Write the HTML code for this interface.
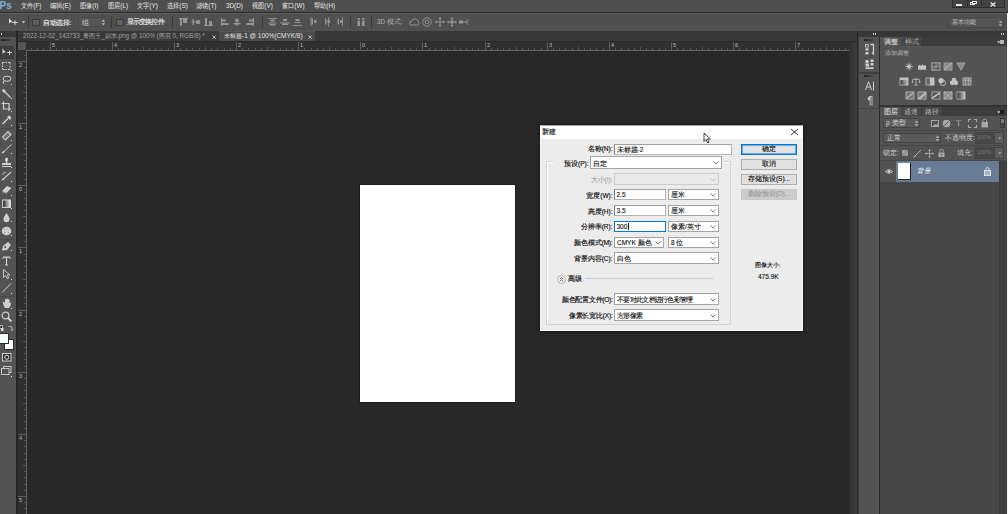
<!DOCTYPE html>
<html><head><meta charset="utf-8">
<style>
*{margin:0;padding:0;box-sizing:border-box}
html,body{width:1008px;height:514px;overflow:hidden;background:#282828;font-family:"Liberation Sans",sans-serif;position:relative}
.a{position:absolute}
.t{position:absolute;white-space:nowrap;line-height:1;font-weight:500}
svg.a{overflow:visible}
</style></head>
<body>
<div class="a" style="left:0px;top:0px;width:1008px;height:12px;background:#4f4f4f;"></div>
<div class="a" style="left:0px;top:12px;width:1008px;height:1px;background:#2b2b2b;"></div>
<div class="t" style="left:-0.5px;top:0.5px;font-size:10px;color:#7cb0e0;font-weight:bold">Ps</div>
<div class="t" style="left:21px;top:1.8px;font-size:7.2px;color:#ececec;transform:scaleX(0.88);transform-origin:0 0">文件(F)</div>
<div class="t" style="left:50px;top:1.8px;font-size:7.2px;color:#ececec;transform:scaleX(0.88);transform-origin:0 0">编辑(E)</div>
<div class="t" style="left:80px;top:1.8px;font-size:7.2px;color:#ececec;transform:scaleX(0.88);transform-origin:0 0">图像(I)</div>
<div class="t" style="left:108px;top:1.8px;font-size:7.2px;color:#ececec;transform:scaleX(0.88);transform-origin:0 0">图层(L)</div>
<div class="t" style="left:137px;top:1.8px;font-size:7.2px;color:#ececec;transform:scaleX(0.88);transform-origin:0 0">文字(Y)</div>
<div class="t" style="left:167px;top:1.8px;font-size:7.2px;color:#ececec;transform:scaleX(0.88);transform-origin:0 0">选择(S)</div>
<div class="t" style="left:196px;top:1.8px;font-size:7.2px;color:#ececec;transform:scaleX(0.88);transform-origin:0 0">滤镜(T)</div>
<div class="t" style="left:226px;top:1.8px;font-size:7.2px;color:#ececec;transform:scaleX(0.88);transform-origin:0 0">3D(D)</div>
<div class="t" style="left:252px;top:1.8px;font-size:7.2px;color:#ececec;transform:scaleX(0.88);transform-origin:0 0">视图(V)</div>
<div class="t" style="left:282px;top:1.8px;font-size:7.2px;color:#ececec;transform:scaleX(0.88);transform-origin:0 0">窗口(W)</div>
<div class="t" style="left:314px;top:1.8px;font-size:7.2px;color:#ececec;transform:scaleX(0.88);transform-origin:0 0">帮助(H)</div>
<div class="a" style="left:952px;top:0px;width:53px;height:8px;background:#424242;border:1px solid #2e2e2e;border-top:none"></div>
<div class="a" style="left:967px;top:0px;width:1px;height:8px;background:#2e2e2e;"></div>
<div class="a" style="left:981px;top:0px;width:1px;height:8px;background:#2e2e2e;"></div>
<div class="a" style="left:956px;top:4px;width:6px;height:1.5px;background:#e8e8e8;"></div>
<div class="a" style="left:970px;top:2px;width:5px;height:3px;background:transparent;border:1px solid #e8e8e8"></div>
<div class="a" style="left:972px;top:1px;width:5px;height:3px;background:#424242;border:1px solid #e8e8e8"></div>
<svg class="a" style="left:990px;top:1.5px" width="6" height="5"><path d="M0.6 0.5 L5.4 4.5 M5.4 0.5 L0.6 4.5" stroke="#f0f0f0" stroke-width="1.2"/></svg>
<div class="a" style="left:0px;top:13px;width:1008px;height:18px;background:#505050;"></div>
<div class="a" style="left:0px;top:13px;width:1008px;height:1px;background:#5e5e5e;"></div>
<svg class="a" style="left:8px;top:17px" width="20" height="10" viewBox="0 0 20 10"><path d="M1 1.2 L1 6.5 L2.4 5.2 L4.8 5.2 Z" fill="#ddd"/><path d="M4.5 5.5 H9.5 M7 3.5 V7.8" stroke="#ddd" stroke-width="1"/><path d="M13.8 4.3 H17.2 L15.5 6.2 Z" fill="#ddd"/></svg>
<div class="a" style="left:28px;top:16px;width:1px;height:12px;background:#3a3a3a;"></div>
<div class="a" style="left:32px;top:19px;width:7.5px;height:6.5px;background:#606060;border:1px solid #3a3a3a"></div>
<div class="t" style="left:43px;top:18.5px;font-size:7px;color:#e6e6e6;letter-spacing:-0.35px;-webkit-text-stroke:0.15px #e6e6e6">自动选择:</div>
<div class="a" style="left:78px;top:17px;width:28px;height:10px;background:#565656;border:1px solid #474747;border-radius:1px;box-shadow:inset 0 0 0 0 #000"></div>
<div class="t" style="left:82px;top:18.5px;font-size:7px;color:#d0d0d0;">组</div>
<svg class="a" style="left:101px;top:19px" width="5" height="7"><path d="M0.7 2.8 L2.5 0.8 L4.3 2.8 Z M0.7 4.2 L2.5 6.2 L4.3 4.2 Z" fill="#bbb"/></svg>
<div class="a" style="left:111px;top:16px;width:1px;height:12px;background:#3a3a3a;"></div>
<div class="a" style="left:116px;top:19px;width:7.5px;height:6.5px;background:#606060;border:1px solid #3a3a3a"></div>
<div class="t" style="left:126.5px;top:18.5px;font-size:6.8px;color:#e6e6e6;letter-spacing:-0.8px;-webkit-text-stroke:0.15px #e6e6e6">显示变换控件</div>
<div class="a" style="left:172px;top:16px;width:1px;height:12px;background:#3a3a3a;"></div>
<div class="a" style="left:262px;top:16px;width:1px;height:12px;background:#3a3a3a;"></div>
<div class="a" style="left:350px;top:16px;width:1px;height:12px;background:#3a3a3a;"></div>
<div class="a" style="left:371px;top:16px;width:1px;height:12px;background:#3a3a3a;"></div>
<div class="t" style="left:377px;top:18.5px;font-size:6.5px;color:#b0b0b0;">3D 模式:</div>
<svg class="a" style="left:179px;top:18px" width="9" height="8" viewBox="0 0 9 8"><rect x="0" y="0" width="9" height="1.2" fill="#959595"/><rect x="1" y="1" width="2" height="6.5" fill="#959595"/><rect x="4" y="1" width="4" height="4" fill="#959595"/></svg>
<svg class="a" style="left:191px;top:18px" width="10" height="8" viewBox="0 0 10 8"><rect x="0.5" y="3.5" width="9" height="1" fill="#959595"/><rect x="1.5" y="1" width="1.3" height="6" fill="#959595"/><rect x="5" y="2" width="4" height="4" rx="1" fill="#959595"/></svg>
<svg class="a" style="left:204px;top:18px" width="9" height="8" viewBox="0 0 9 8"><rect x="0" y="6.8" width="9" height="1.2" fill="#959595"/><rect x="1" y="0" width="2" height="7" fill="#959595"/><rect x="5" y="3" width="3" height="4" fill="#959595"/></svg>
<svg class="a" style="left:221px;top:18px" width="8" height="8" viewBox="0 0 8 8"><rect x="0" y="0" width="1.2" height="8" fill="#959595"/><rect x="1" y="1.5" width="4" height="2" fill="#959595"/><rect x="1" y="5" width="6.5" height="2" fill="#959595"/></svg>
<svg class="a" style="left:233px;top:18px" width="8" height="8" viewBox="0 0 8 8"><rect x="3.4" y="0" width="1.2" height="8" fill="#959595"/><rect x="2" y="1.5" width="4" height="2" fill="#959595"/><rect x="0.5" y="5" width="7" height="1.5" fill="#959595"/></svg>
<svg class="a" style="left:246px;top:18px" width="8" height="8" viewBox="0 0 8 8"><rect x="6.8" y="0" width="1.2" height="8" fill="#959595"/><rect x="3" y="1.5" width="4" height="2" fill="#959595"/><rect x="0.5" y="5" width="6.5" height="2" fill="#959595"/></svg>
<svg class="a" style="left:268px;top:18px" width="9" height="8" viewBox="0 0 9 8"><rect x="0" y="0" width="9" height="0.8" fill="#959595"/><rect x="2.5" y="1.5" width="4" height="2" fill="#959595"/><rect x="0.5" y="4.5" width="8" height="1" fill="#959595"/><rect x="1.5" y="6" width="6" height="1.5" fill="#959595"/></svg>
<svg class="a" style="left:280px;top:18px" width="10" height="8" viewBox="0 0 10 8"><rect x="3" y="1" width="4" height="2" fill="#959595"/><rect x="0" y="4.5" width="10" height="0.9" fill="#959595"/><rect x="2" y="5.5" width="6" height="1.5" fill="#959595"/></svg>
<svg class="a" style="left:293px;top:18px" width="9" height="8" viewBox="0 0 9 8"><rect x="2.5" y="1" width="4" height="2" fill="#959595"/><rect x="1.5" y="4" width="6" height="1" fill="#959595"/><rect x="0" y="7" width="9" height="0.9" fill="#959595"/></svg>
<svg class="a" style="left:310px;top:17px" width="7" height="10" viewBox="0 0 7 10"><rect x="0.5" y="0" width="0.9" height="9" fill="#959595"/><rect x="1.5" y="1.5" width="1.5" height="6" fill="#959595"/><rect x="4" y="3" width="2.5" height="3" fill="#959595"/></svg>
<svg class="a" style="left:324px;top:17px" width="7" height="10" viewBox="0 0 7 10"><rect x="1" y="1.5" width="1.5" height="6" fill="#959595"/><rect x="4.2" y="0" width="0.9" height="10" fill="#959595"/><rect x="3.5" y="3" width="2.5" height="3" fill="#959595"/></svg>
<svg class="a" style="left:336px;top:17px" width="7" height="10" viewBox="0 0 7 10"><rect x="1.5" y="1.5" width="1.5" height="6" fill="#959595"/><rect x="4" y="3" width="2.5" height="3" fill="#959595"/><rect x="6" y="0" width="0.9" height="9" fill="#959595"/></svg>
<svg class="a" style="left:357px;top:18px" width="9" height="8" viewBox="0 0 9 8"><rect x="0.5" y="0" width="2.5" height="1.5" fill="#959595"/><rect x="0.5" y="2.5" width="2.5" height="5.5" fill="#959595"/><rect x="5" y="0" width="2.5" height="1.5" fill="#959595"/><rect x="5" y="2.5" width="2.5" height="5.5" fill="#959595"/></svg>
<svg class="a" style="left:409px;top:17px" width="11" height="9" viewBox="0 0 11 9"><path d="M1 6 Q0.5 4 3 4 Q4 1 7 2 Q10 3 9.5 6 Q11 7 9 8 H2 Q0 7.5 1 6 Z" fill="none" stroke="#959595" stroke-width="0.9"/></svg>
<svg class="a" style="left:422px;top:17px" width="10" height="10" viewBox="0 0 10 10"><circle cx="5" cy="5" r="4.2" fill="none" stroke="#959595" stroke-width="0.9"/><circle cx="5" cy="5" r="1.8" fill="none" stroke="#959595" stroke-width="0.9"/></svg>
<svg class="a" style="left:435px;top:17px" width="10" height="10" viewBox="0 0 10 10"><path d="M5 0.5 V9.5 M0.5 5 H9.5" stroke="#959595" stroke-width="0.9"/><path d="M5 0 L3.5 2 H6.5 Z M5 10 L3.5 8 H6.5 Z M0 5 L2 3.5 V6.5 Z M10 5 L8 3.5 V6.5 Z" fill="#959595"/></svg>
<svg class="a" style="left:447px;top:17px" width="10" height="10" viewBox="0 0 10 10"><path d="M5 0.5 V9.5 M0.5 5 H9.5" stroke="#959595" stroke-width="0.9"/><circle cx="5" cy="5" r="1.8" fill="#959595"/><path d="M5 0 L3.5 2 H6.5 Z M5 10 L3.5 8 H6.5 Z M0 5 L2 3.5 V6.5 Z M10 5 L8 3.5 V6.5 Z" fill="#959595"/></svg>
<svg class="a" style="left:459px;top:18px" width="10" height="8" viewBox="0 0 10 8"><rect x="0" y="2.5" width="4" height="3" fill="#959595"/><path d="M4 4 H9.5 M9.5 1 L6.5 4 L9.5 7" fill="none" stroke="#959595" stroke-width="0.9"/></svg>
<div class="a" style="left:948px;top:17px;width:56px;height:11px;background:#555555;border:1px solid #474747;border-radius:1px"></div>
<div class="t" style="left:952px;top:19px;font-size:6.2px;color:#c4c4c4;">基本功能</div>
<svg class="a" style="left:998px;top:19.5px" width="5" height="7"><path d="M0.7 2.8 L2.5 0.8 L4.3 2.8 Z M0.7 4.2 L2.5 6.2 L4.3 4.2 Z" fill="#aaa"/></svg>
<div class="a" style="left:0px;top:31px;width:16px;height:6px;background:#383838;"></div>
<div class="a" style="left:0px;top:37px;width:16px;height:477px;background:#535353;"></div>
<div class="a" style="left:16px;top:31px;width:2px;height:483px;background:#262626;"></div>
<div class="a" style="left:1px;top:33px;width:1px;height:2px;background:#d0d0d0;"></div>
<div class="a" style="left:1px;top:39px;width:11px;height:2px;background:linear-gradient(90deg,#262626,#3a3a3a 70%,#555);"></div>
<div class="a" style="left:0px;top:46px;width:14px;height:12.5px;background:#3f3f3f;border:1px solid #393939;border-radius:1px"></div>
<svg class="a" style="left:2px;top:48px" width="11" height="8" viewBox="0 0 11 8"><path d="M0.5 0.5 L0.5 6 L2 4.6 L4 4.6 Z" fill="#cfcfcf"/><path d="M5 4.5 H10 M7.5 2.5 V7" stroke="#cfcfcf" stroke-width="0.9"/><circle cx="7.5" cy="4.5" r="1" fill="#cfcfcf"/></svg>
<svg class="a" style="left:2px;top:62px" width="9" height="8" viewBox="0 0 9 8"><path d="M0.5 2.5 V0.5 H2.5 M3.5 0.5 H5 M6 0.5 H8 V2.5 M8 4 V5.5 M8 6.5 V7.5 H6 M5 7.5 H3.5 M2.5 7.5 H0.5 V6 M0.5 5 V3.5" fill="none" stroke="#cfcfcf" stroke-width="1"/></svg>
<div class="a" style="left:11px;top:70px;width:1px;height:1px;background:#d8d8d8;"></div>
<svg class="a" style="left:1px;top:75px" width="11" height="10" viewBox="0 0 11 10"><ellipse cx="6" cy="3.7" rx="4" ry="2.6" fill="none" stroke="#cfcfcf" stroke-width="1"/><path d="M3 5.8 Q1.5 7 2.8 8.8" fill="none" stroke="#cfcfcf" stroke-width="1"/></svg>
<div class="a" style="left:11px;top:84px;width:1px;height:1px;background:#d8d8d8;"></div>
<svg class="a" style="left:1px;top:88px" width="11" height="10" viewBox="0 0 11 10"><path d="M3 3 L9.5 9.5" stroke="#cfcfcf" stroke-width="1.3"/><path d="M0.8 2.5 L2.5 0.8 L5 3 L3 5 Z" fill="#cfcfcf"/></svg>
<div class="a" style="left:11px;top:98px;width:1px;height:1px;background:#d8d8d8;"></div>
<svg class="a" style="left:1px;top:101px" width="11" height="10" viewBox="0 0 11 10"><path d="M2.5 0.5 V8 H10 M0.5 2.5 H8 V10" fill="none" stroke="#cfcfcf" stroke-width="1.2"/></svg>
<div class="a" style="left:11px;top:111px;width:1px;height:1px;background:#d8d8d8;"></div>
<svg class="a" style="left:1px;top:115px" width="11" height="10" viewBox="0 0 11 10"><path d="M1.5 9 L7 3.5" stroke="#cfcfcf" stroke-width="1.4"/><path d="M6 2 L9 5 L10 3.5 Q10.5 1 8 0.5 Z" fill="#cfcfcf"/></svg>
<div class="a" style="left:11px;top:125px;width:1px;height:1px;background:#d8d8d8;"></div>
<div class="a" style="left:0px;top:128px;width:14px;height:1px;background:#474747;"></div>
<svg class="a" style="left:1px;top:130px" width="11" height="10" viewBox="0 0 11 10"><path d="M1.5 7 L7 1.5 L10 4.5 L4.5 10 Z" fill="none" stroke="#cfcfcf" stroke-width="1.1"/><path d="M3.5 6 L6 8.5 M5 4.5 L7.5 7 M6.5 3 L9 5.5" stroke="#cfcfcf" stroke-width="0.7"/></svg>
<div class="a" style="left:11px;top:140px;width:1px;height:1px;background:#d8d8d8;"></div>
<svg class="a" style="left:1px;top:144px" width="11" height="10" viewBox="0 0 11 10"><path d="M3 7.5 L10.5 0.5" stroke="#cfcfcf" stroke-width="1"/><path d="M0.5 9.5 Q1 6.5 3.5 7 Q4 9 0.5 9.5 Z" fill="#cfcfcf"/></svg>
<div class="a" style="left:11px;top:153px;width:1px;height:1px;background:#d8d8d8;"></div>
<svg class="a" style="left:1px;top:157px" width="11" height="11" viewBox="0 0 11 11"><rect x="4" y="0.5" width="3" height="4" rx="1.5" fill="#cfcfcf"/><rect x="4.8" y="4" width="1.5" height="2" fill="#cfcfcf"/><rect x="1" y="6" width="9" height="2" fill="#cfcfcf"/><rect x="1" y="9" width="9" height="1" fill="#cfcfcf"/></svg>
<div class="a" style="left:11px;top:167px;width:1px;height:1px;background:#d8d8d8;"></div>
<svg class="a" style="left:1px;top:171px" width="11" height="10" viewBox="0 0 11 10"><path d="M3 7.5 L10 1" stroke="#cfcfcf" stroke-width="1.1"/><path d="M0.5 9.5 Q1 6.5 3.5 7 Q4 9 0.5 9.5 Z" fill="#cfcfcf"/><path d="M1.5 4 Q2 1 5 1.2" fill="none" stroke="#cfcfcf" stroke-width="0.8"/></svg>
<div class="a" style="left:11px;top:181px;width:1px;height:1px;background:#d8d8d8;"></div>
<svg class="a" style="left:1px;top:185px" width="11" height="9" viewBox="0 0 11 9"><path d="M1 6 L6 1 L10.5 3 L5.5 8 Z" fill="#cfcfcf"/><path d="M1 6 L5.5 8 L5.5 9 L1 7 Z" fill="#9a9a9a"/></svg>
<div class="a" style="left:11px;top:195px;width:1px;height:1px;background:#d8d8d8;"></div>
<svg class="a" style="left:1px;top:199px" width="10" height="9" viewBox="0 0 10 9"><defs><linearGradient id="g1" x1="0" x2="1"><stop offset="0" stop-color="#222"/><stop offset="1" stop-color="#eee"/></linearGradient></defs><rect x="1.5" y="1" width="8" height="7.5" fill="url(#g1)" stroke="#ddd" stroke-width="0.9"/></svg>
<div class="a" style="left:11px;top:208px;width:1px;height:1px;background:#d8d8d8;"></div>
<svg class="a" style="left:2px;top:212px" width="9" height="11" viewBox="0 0 9 11"><path d="M4.5 1 Q7.8 5.5 7.5 7.3 A3 3 0 0 1 1.5 7.3 Q1.2 5.5 4.5 1 Z" fill="#cfcfcf"/></svg>
<div class="a" style="left:11px;top:221px;width:1px;height:1px;background:#d8d8d8;"></div>
<svg class="a" style="left:1px;top:226px" width="11" height="10" viewBox="0 0 11 10"><ellipse cx="5.5" cy="5" rx="4.8" ry="4.3" fill="#cfcfcf"/><path d="M3 3 L4 4 M6 2.5 L7 3.5 M3 6 L4 7 M7 6 L8 7" stroke="#888" stroke-width="0.8"/></svg>
<div class="a" style="left:11px;top:235px;width:1px;height:1px;background:#d8d8d8;"></div>
<div class="a" style="left:0px;top:239px;width:14px;height:1px;background:#474747;"></div>
<svg class="a" style="left:1px;top:241px" width="11" height="10" viewBox="0 0 11 10"><path d="M1 9.5 L2 5 L7 1 L10 4 L6 9 Z" fill="#cfcfcf"/><circle cx="4.2" cy="6" r="1" fill="#535353"/></svg>
<div class="a" style="left:11px;top:250px;width:1px;height:1px;background:#d8d8d8;"></div>
<svg class="a" style="left:2px;top:255.5px" width="9" height="10" viewBox="0 0 9 10"><path d="M1 1.2 H8 M4.5 1.2 V9 M3 9 H6" stroke="#cfcfcf" stroke-width="1.2"/><path d="M1 1 V3 M8 1 V3" stroke="#cfcfcf" stroke-width="0.8"/></svg>
<svg class="a" style="left:3px;top:269px" width="8" height="10" viewBox="0 0 8 10"><path d="M0.5 0.5 L0.5 8.5 L2.5 6.5 L4 9.5 L5.5 9 L4.3 6 L7 6 Z" fill="none" stroke="#cfcfcf" stroke-width="0.9"/></svg>
<div class="a" style="left:11px;top:279px;width:1px;height:1px;background:#d8d8d8;"></div>
<svg class="a" style="left:1px;top:283px" width="11" height="10" viewBox="0 0 11 10"><path d="M1 9.5 L10 0.5" stroke="#cfcfcf" stroke-width="1"/></svg>
<div class="a" style="left:11px;top:293px;width:1px;height:1px;background:#d8d8d8;"></div>
<div class="a" style="left:0px;top:296px;width:14px;height:1px;background:#474747;"></div>
<svg class="a" style="left:1px;top:298px" width="11" height="11" viewBox="0 0 11 11"><path d="M2 5 Q1 4 2.5 3.5 L4 5 V1.5 Q5 0.5 5.5 1.5 V4 V1 Q6.5 0 7 1 V4 V1.5 Q8 1 8.5 2 V5 Q9.5 4 10 5 Q10 8 8 10 H4 Q2.5 8 2 5 Z" fill="#cfcfcf"/></svg>
<div class="a" style="left:11px;top:308px;width:1px;height:1px;background:#d8d8d8;"></div>
<svg class="a" style="left:1px;top:311px" width="11" height="11" viewBox="0 0 11 11"><circle cx="4.5" cy="4.5" r="3.4" fill="none" stroke="#cfcfcf" stroke-width="1.3"/><path d="M7 7 L10.5 10.5" stroke="#cfcfcf" stroke-width="1.8"/></svg>
<svg class="a" style="left:0px;top:325px" width="4" height="7" viewBox="0 0 4 7"><rect x="0" y="0.5" width="2.5" height="3" fill="#222" stroke="#ddd" stroke-width="0.7"/><rect x="1" y="3" width="2.5" height="3" fill="#ddd"/></svg>
<svg class="a" style="left:8px;top:325px" width="5" height="6" viewBox="0 0 5 6"><path d="M0.5 1.5 H3 Q4 1.5 4 3 V5.5 M3 4.5 L4 5.5 L5 4.5" fill="none" stroke="#cfcfcf" stroke-width="0.8"/></svg>
<div class="a" style="left:4px;top:339px;width:9.5px;height:10.5px;background:#ffffff;border:1px solid #2a2a2a"></div>
<div class="a" style="left:0px;top:333px;width:9px;height:10.5px;background:#f4fbfb;border:1px solid #2a2a2a;border-left:none"></div>
<svg class="a" style="left:1.5px;top:352.5px" width="10" height="9" viewBox="0 0 10 9"><rect x="0.5" y="0.5" width="8.5" height="7.5" fill="#2e2e2e" stroke="#cfcfcf" stroke-width="1"/><circle cx="4.75" cy="4.25" r="2.1" fill="none" stroke="#e0e0e0" stroke-width="1"/></svg>
<svg class="a" style="left:1px;top:366px" width="11" height="11" viewBox="0 0 11 11"><rect x="2.5" y="0.5" width="7.5" height="6" fill="none" stroke="#cfcfcf" stroke-width="0.9"/><rect x="0.5" y="2.5" width="7.5" height="6" fill="#535353" stroke="#cfcfcf" stroke-width="0.9"/></svg>
<div class="a" style="left:11px;top:376px;width:1px;height:1px;background:#d8d8d8;"></div>
<div class="a" style="left:18px;top:31px;width:839px;height:10px;background:#393939;"></div>
<div class="a" style="left:219px;top:31px;width:96px;height:10px;background:#4a4a4a;border-top:1px solid #565656"></div>
<div class="t" style="left:23px;top:33.3px;font-size:6.3px;color:#a0a0a0;">2022-12-02_143733_青图王_副本.png @ 100% (图层 0, RGB/8) *</div>
<svg class="a" style="left:211.5px;top:34.5px" width="5" height="5"><path d="M0.5 0.5 L3.8 3.8 M3.8 0.5 L0.5 3.8" stroke="#d0d0d0" stroke-width="0.9"/></svg>
<div class="t" style="left:224px;top:33.3px;font-size:6.45px;color:#e6e6e6;">未标题-1 @ 100%(CMYK/8)</div>
<svg class="a" style="left:307.5px;top:34.5px" width="5" height="5"><path d="M0.5 0.5 L3.8 3.8 M3.8 0.5 L0.5 3.8" stroke="#d0d0d0" stroke-width="0.9"/></svg>
<div class="a" style="left:18px;top:41px;width:839px;height:1px;background:#2a2a2a;"></div>
<div class="a" style="left:18px;top:42px;width:831px;height:8px;background:#303030;"></div>
<div class="a" style="left:18px;top:50px;width:9px;height:464px;background:#303030;"></div>
<div class="a" style="left:18px;top:42px;width:8px;height:8px;background:#555555;"></div>
<div class="a" style="left:26px;top:50px;width:823px;height:1px;background:#646464;"></div>
<div class="a" style="left:26px;top:50px;width:1px;height:464px;background:#646464;"></div>
<div class="a" style="left:31px;top:48px;width:1px;height:2px;background:#565656;"></div>
<div class="a" style="left:37px;top:48px;width:1px;height:2px;background:#565656;"></div>
<div class="a" style="left:43px;top:48px;width:1px;height:2px;background:#565656;"></div>
<div class="a" style="left:50px;top:42px;width:1px;height:8px;background:#5c5c5c;"></div>
<div class="t" style="left:52px;top:43px;font-size:5.5px;color:#bbb;">5</div>
<div class="a" style="left:56px;top:48px;width:1px;height:2px;background:#565656;"></div>
<div class="a" style="left:62px;top:48px;width:1px;height:2px;background:#565656;"></div>
<div class="a" style="left:68px;top:48px;width:1px;height:2px;background:#565656;"></div>
<div class="a" style="left:74px;top:48px;width:1px;height:2px;background:#565656;"></div>
<div class="a" style="left:81px;top:47px;width:1px;height:3px;background:#565656;"></div>
<div class="a" style="left:87px;top:48px;width:1px;height:2px;background:#565656;"></div>
<div class="a" style="left:93px;top:48px;width:1px;height:2px;background:#565656;"></div>
<div class="a" style="left:99px;top:48px;width:1px;height:2px;background:#565656;"></div>
<div class="a" style="left:105px;top:48px;width:1px;height:2px;background:#565656;"></div>
<div class="a" style="left:112px;top:42px;width:1px;height:8px;background:#5c5c5c;"></div>
<div class="t" style="left:114px;top:43px;font-size:5.5px;color:#bbb;">4</div>
<div class="a" style="left:118px;top:48px;width:1px;height:2px;background:#565656;"></div>
<div class="a" style="left:124px;top:48px;width:1px;height:2px;background:#565656;"></div>
<div class="a" style="left:130px;top:48px;width:1px;height:2px;background:#565656;"></div>
<div class="a" style="left:137px;top:48px;width:1px;height:2px;background:#565656;"></div>
<div class="a" style="left:143px;top:47px;width:1px;height:3px;background:#565656;"></div>
<div class="a" style="left:149px;top:48px;width:1px;height:2px;background:#565656;"></div>
<div class="a" style="left:155px;top:48px;width:1px;height:2px;background:#565656;"></div>
<div class="a" style="left:161px;top:48px;width:1px;height:2px;background:#565656;"></div>
<div class="a" style="left:168px;top:48px;width:1px;height:2px;background:#565656;"></div>
<div class="a" style="left:174px;top:42px;width:1px;height:8px;background:#5c5c5c;"></div>
<div class="t" style="left:176px;top:43px;font-size:5.5px;color:#bbb;">3</div>
<div class="a" style="left:180px;top:48px;width:1px;height:2px;background:#565656;"></div>
<div class="a" style="left:186px;top:48px;width:1px;height:2px;background:#565656;"></div>
<div class="a" style="left:192px;top:48px;width:1px;height:2px;background:#565656;"></div>
<div class="a" style="left:199px;top:48px;width:1px;height:2px;background:#565656;"></div>
<div class="a" style="left:205px;top:47px;width:1px;height:3px;background:#565656;"></div>
<div class="a" style="left:211px;top:48px;width:1px;height:2px;background:#565656;"></div>
<div class="a" style="left:217px;top:48px;width:1px;height:2px;background:#565656;"></div>
<div class="a" style="left:224px;top:48px;width:1px;height:2px;background:#565656;"></div>
<div class="a" style="left:230px;top:48px;width:1px;height:2px;background:#565656;"></div>
<div class="a" style="left:236px;top:42px;width:1px;height:8px;background:#5c5c5c;"></div>
<div class="t" style="left:238px;top:43px;font-size:5.5px;color:#bbb;">2</div>
<div class="a" style="left:242px;top:48px;width:1px;height:2px;background:#565656;"></div>
<div class="a" style="left:248px;top:48px;width:1px;height:2px;background:#565656;"></div>
<div class="a" style="left:255px;top:48px;width:1px;height:2px;background:#565656;"></div>
<div class="a" style="left:261px;top:48px;width:1px;height:2px;background:#565656;"></div>
<div class="a" style="left:267px;top:47px;width:1px;height:3px;background:#565656;"></div>
<div class="a" style="left:273px;top:48px;width:1px;height:2px;background:#565656;"></div>
<div class="a" style="left:280px;top:48px;width:1px;height:2px;background:#565656;"></div>
<div class="a" style="left:286px;top:48px;width:1px;height:2px;background:#565656;"></div>
<div class="a" style="left:292px;top:48px;width:1px;height:2px;background:#565656;"></div>
<div class="a" style="left:298px;top:42px;width:1px;height:8px;background:#5c5c5c;"></div>
<div class="t" style="left:300px;top:43px;font-size:5.5px;color:#bbb;">1</div>
<div class="a" style="left:304px;top:48px;width:1px;height:2px;background:#565656;"></div>
<div class="a" style="left:311px;top:48px;width:1px;height:2px;background:#565656;"></div>
<div class="a" style="left:317px;top:48px;width:1px;height:2px;background:#565656;"></div>
<div class="a" style="left:323px;top:48px;width:1px;height:2px;background:#565656;"></div>
<div class="a" style="left:329px;top:47px;width:1px;height:3px;background:#565656;"></div>
<div class="a" style="left:335px;top:48px;width:1px;height:2px;background:#565656;"></div>
<div class="a" style="left:342px;top:48px;width:1px;height:2px;background:#565656;"></div>
<div class="a" style="left:348px;top:48px;width:1px;height:2px;background:#565656;"></div>
<div class="a" style="left:354px;top:48px;width:1px;height:2px;background:#565656;"></div>
<div class="a" style="left:360px;top:42px;width:1px;height:8px;background:#5c5c5c;"></div>
<div class="t" style="left:362px;top:43px;font-size:5.5px;color:#bbb;">0</div>
<div class="a" style="left:367px;top:48px;width:1px;height:2px;background:#565656;"></div>
<div class="a" style="left:373px;top:48px;width:1px;height:2px;background:#565656;"></div>
<div class="a" style="left:379px;top:48px;width:1px;height:2px;background:#565656;"></div>
<div class="a" style="left:385px;top:48px;width:1px;height:2px;background:#565656;"></div>
<div class="a" style="left:391px;top:47px;width:1px;height:3px;background:#565656;"></div>
<div class="a" style="left:398px;top:48px;width:1px;height:2px;background:#565656;"></div>
<div class="a" style="left:404px;top:48px;width:1px;height:2px;background:#565656;"></div>
<div class="a" style="left:410px;top:48px;width:1px;height:2px;background:#565656;"></div>
<div class="a" style="left:416px;top:48px;width:1px;height:2px;background:#565656;"></div>
<div class="a" style="left:422px;top:42px;width:1px;height:8px;background:#5c5c5c;"></div>
<div class="t" style="left:424px;top:43px;font-size:5.5px;color:#bbb;">1</div>
<div class="a" style="left:429px;top:48px;width:1px;height:2px;background:#565656;"></div>
<div class="a" style="left:435px;top:48px;width:1px;height:2px;background:#565656;"></div>
<div class="a" style="left:441px;top:48px;width:1px;height:2px;background:#565656;"></div>
<div class="a" style="left:447px;top:48px;width:1px;height:2px;background:#565656;"></div>
<div class="a" style="left:454px;top:47px;width:1px;height:3px;background:#565656;"></div>
<div class="a" style="left:460px;top:48px;width:1px;height:2px;background:#565656;"></div>
<div class="a" style="left:466px;top:48px;width:1px;height:2px;background:#565656;"></div>
<div class="a" style="left:472px;top:48px;width:1px;height:2px;background:#565656;"></div>
<div class="a" style="left:478px;top:48px;width:1px;height:2px;background:#565656;"></div>
<div class="a" style="left:485px;top:42px;width:1px;height:8px;background:#5c5c5c;"></div>
<div class="t" style="left:487px;top:43px;font-size:5.5px;color:#bbb;">2</div>
<div class="a" style="left:491px;top:48px;width:1px;height:2px;background:#565656;"></div>
<div class="a" style="left:497px;top:48px;width:1px;height:2px;background:#565656;"></div>
<div class="a" style="left:503px;top:48px;width:1px;height:2px;background:#565656;"></div>
<div class="a" style="left:509px;top:48px;width:1px;height:2px;background:#565656;"></div>
<div class="a" style="left:516px;top:47px;width:1px;height:3px;background:#565656;"></div>
<div class="a" style="left:522px;top:48px;width:1px;height:2px;background:#565656;"></div>
<div class="a" style="left:528px;top:48px;width:1px;height:2px;background:#565656;"></div>
<div class="a" style="left:534px;top:48px;width:1px;height:2px;background:#565656;"></div>
<div class="a" style="left:541px;top:48px;width:1px;height:2px;background:#565656;"></div>
<div class="a" style="left:547px;top:42px;width:1px;height:8px;background:#5c5c5c;"></div>
<div class="t" style="left:549px;top:43px;font-size:5.5px;color:#bbb;">3</div>
<div class="a" style="left:553px;top:48px;width:1px;height:2px;background:#565656;"></div>
<div class="a" style="left:559px;top:48px;width:1px;height:2px;background:#565656;"></div>
<div class="a" style="left:565px;top:48px;width:1px;height:2px;background:#565656;"></div>
<div class="a" style="left:572px;top:48px;width:1px;height:2px;background:#565656;"></div>
<div class="a" style="left:578px;top:47px;width:1px;height:3px;background:#565656;"></div>
<div class="a" style="left:584px;top:48px;width:1px;height:2px;background:#565656;"></div>
<div class="a" style="left:590px;top:48px;width:1px;height:2px;background:#565656;"></div>
<div class="a" style="left:596px;top:48px;width:1px;height:2px;background:#565656;"></div>
<div class="a" style="left:603px;top:48px;width:1px;height:2px;background:#565656;"></div>
<div class="a" style="left:609px;top:42px;width:1px;height:8px;background:#5c5c5c;"></div>
<div class="t" style="left:611px;top:43px;font-size:5.5px;color:#bbb;">4</div>
<div class="a" style="left:615px;top:48px;width:1px;height:2px;background:#565656;"></div>
<div class="a" style="left:621px;top:48px;width:1px;height:2px;background:#565656;"></div>
<div class="a" style="left:628px;top:48px;width:1px;height:2px;background:#565656;"></div>
<div class="a" style="left:634px;top:48px;width:1px;height:2px;background:#565656;"></div>
<div class="a" style="left:640px;top:47px;width:1px;height:3px;background:#565656;"></div>
<div class="a" style="left:646px;top:48px;width:1px;height:2px;background:#565656;"></div>
<div class="a" style="left:652px;top:48px;width:1px;height:2px;background:#565656;"></div>
<div class="a" style="left:659px;top:48px;width:1px;height:2px;background:#565656;"></div>
<div class="a" style="left:665px;top:48px;width:1px;height:2px;background:#565656;"></div>
<div class="a" style="left:671px;top:42px;width:1px;height:8px;background:#5c5c5c;"></div>
<div class="t" style="left:673px;top:43px;font-size:5.5px;color:#bbb;">5</div>
<div class="a" style="left:677px;top:48px;width:1px;height:2px;background:#565656;"></div>
<div class="a" style="left:683px;top:48px;width:1px;height:2px;background:#565656;"></div>
<div class="a" style="left:690px;top:48px;width:1px;height:2px;background:#565656;"></div>
<div class="a" style="left:696px;top:48px;width:1px;height:2px;background:#565656;"></div>
<div class="a" style="left:702px;top:47px;width:1px;height:3px;background:#565656;"></div>
<div class="a" style="left:708px;top:48px;width:1px;height:2px;background:#565656;"></div>
<div class="a" style="left:715px;top:48px;width:1px;height:2px;background:#565656;"></div>
<div class="a" style="left:721px;top:48px;width:1px;height:2px;background:#565656;"></div>
<div class="a" style="left:727px;top:48px;width:1px;height:2px;background:#565656;"></div>
<div class="a" style="left:733px;top:42px;width:1px;height:8px;background:#5c5c5c;"></div>
<div class="t" style="left:735px;top:43px;font-size:5.5px;color:#bbb;">6</div>
<div class="a" style="left:739px;top:48px;width:1px;height:2px;background:#565656;"></div>
<div class="a" style="left:746px;top:48px;width:1px;height:2px;background:#565656;"></div>
<div class="a" style="left:752px;top:48px;width:1px;height:2px;background:#565656;"></div>
<div class="a" style="left:758px;top:48px;width:1px;height:2px;background:#565656;"></div>
<div class="a" style="left:764px;top:47px;width:1px;height:3px;background:#565656;"></div>
<div class="a" style="left:770px;top:48px;width:1px;height:2px;background:#565656;"></div>
<div class="a" style="left:777px;top:48px;width:1px;height:2px;background:#565656;"></div>
<div class="a" style="left:783px;top:48px;width:1px;height:2px;background:#565656;"></div>
<div class="a" style="left:789px;top:48px;width:1px;height:2px;background:#565656;"></div>
<div class="a" style="left:795px;top:42px;width:1px;height:8px;background:#5c5c5c;"></div>
<div class="t" style="left:797px;top:43px;font-size:5.5px;color:#bbb;">7</div>
<div class="a" style="left:802px;top:48px;width:1px;height:2px;background:#565656;"></div>
<div class="a" style="left:808px;top:48px;width:1px;height:2px;background:#565656;"></div>
<div class="a" style="left:814px;top:48px;width:1px;height:2px;background:#565656;"></div>
<div class="a" style="left:820px;top:48px;width:1px;height:2px;background:#565656;"></div>
<div class="a" style="left:826px;top:47px;width:1px;height:3px;background:#565656;"></div>
<div class="a" style="left:833px;top:48px;width:1px;height:2px;background:#565656;"></div>
<div class="a" style="left:839px;top:48px;width:1px;height:2px;background:#565656;"></div>
<div class="a" style="left:845px;top:48px;width:1px;height:2px;background:#565656;"></div>
<div class="a" style="left:24px;top:55px;width:2px;height:1px;background:#565656;"></div>
<div class="a" style="left:18px;top:61px;width:8px;height:1px;background:#5c5c5c;"></div>
<div class="t" style="left:19px;top:63px;font-size:5.5px;color:#bbb;">2</div>
<div class="a" style="left:24px;top:67px;width:2px;height:1px;background:#565656;"></div>
<div class="a" style="left:24px;top:73px;width:2px;height:1px;background:#565656;"></div>
<div class="a" style="left:24px;top:80px;width:2px;height:1px;background:#565656;"></div>
<div class="a" style="left:24px;top:86px;width:2px;height:1px;background:#565656;"></div>
<div class="a" style="left:23px;top:92px;width:3px;height:1px;background:#565656;"></div>
<div class="a" style="left:24px;top:98px;width:2px;height:1px;background:#565656;"></div>
<div class="a" style="left:24px;top:105px;width:2px;height:1px;background:#565656;"></div>
<div class="a" style="left:24px;top:111px;width:2px;height:1px;background:#565656;"></div>
<div class="a" style="left:24px;top:117px;width:2px;height:1px;background:#565656;"></div>
<div class="a" style="left:18px;top:123px;width:8px;height:1px;background:#5c5c5c;"></div>
<div class="t" style="left:19px;top:125px;font-size:5.5px;color:#bbb;">1</div>
<div class="a" style="left:24px;top:129px;width:2px;height:1px;background:#565656;"></div>
<div class="a" style="left:24px;top:136px;width:2px;height:1px;background:#565656;"></div>
<div class="a" style="left:24px;top:142px;width:2px;height:1px;background:#565656;"></div>
<div class="a" style="left:24px;top:148px;width:2px;height:1px;background:#565656;"></div>
<div class="a" style="left:23px;top:154px;width:3px;height:1px;background:#565656;"></div>
<div class="a" style="left:24px;top:160px;width:2px;height:1px;background:#565656;"></div>
<div class="a" style="left:24px;top:167px;width:2px;height:1px;background:#565656;"></div>
<div class="a" style="left:24px;top:173px;width:2px;height:1px;background:#565656;"></div>
<div class="a" style="left:24px;top:179px;width:2px;height:1px;background:#565656;"></div>
<div class="a" style="left:18px;top:185px;width:8px;height:1px;background:#5c5c5c;"></div>
<div class="t" style="left:19px;top:187px;font-size:5.5px;color:#bbb;">0</div>
<div class="a" style="left:24px;top:192px;width:2px;height:1px;background:#565656;"></div>
<div class="a" style="left:24px;top:198px;width:2px;height:1px;background:#565656;"></div>
<div class="a" style="left:24px;top:204px;width:2px;height:1px;background:#565656;"></div>
<div class="a" style="left:24px;top:210px;width:2px;height:1px;background:#565656;"></div>
<div class="a" style="left:23px;top:216px;width:3px;height:1px;background:#565656;"></div>
<div class="a" style="left:24px;top:223px;width:2px;height:1px;background:#565656;"></div>
<div class="a" style="left:24px;top:229px;width:2px;height:1px;background:#565656;"></div>
<div class="a" style="left:24px;top:235px;width:2px;height:1px;background:#565656;"></div>
<div class="a" style="left:24px;top:241px;width:2px;height:1px;background:#565656;"></div>
<div class="a" style="left:18px;top:247px;width:8px;height:1px;background:#5c5c5c;"></div>
<div class="t" style="left:19px;top:249px;font-size:5.5px;color:#bbb;">1</div>
<div class="a" style="left:24px;top:254px;width:2px;height:1px;background:#565656;"></div>
<div class="a" style="left:24px;top:260px;width:2px;height:1px;background:#565656;"></div>
<div class="a" style="left:24px;top:266px;width:2px;height:1px;background:#565656;"></div>
<div class="a" style="left:24px;top:272px;width:2px;height:1px;background:#565656;"></div>
<div class="a" style="left:23px;top:279px;width:3px;height:1px;background:#565656;"></div>
<div class="a" style="left:24px;top:285px;width:2px;height:1px;background:#565656;"></div>
<div class="a" style="left:24px;top:291px;width:2px;height:1px;background:#565656;"></div>
<div class="a" style="left:24px;top:297px;width:2px;height:1px;background:#565656;"></div>
<div class="a" style="left:24px;top:303px;width:2px;height:1px;background:#565656;"></div>
<div class="a" style="left:18px;top:310px;width:8px;height:1px;background:#5c5c5c;"></div>
<div class="t" style="left:19px;top:312px;font-size:5.5px;color:#bbb;">2</div>
<div class="a" style="left:24px;top:316px;width:2px;height:1px;background:#565656;"></div>
<div class="a" style="left:24px;top:322px;width:2px;height:1px;background:#565656;"></div>
<div class="a" style="left:24px;top:328px;width:2px;height:1px;background:#565656;"></div>
<div class="a" style="left:24px;top:334px;width:2px;height:1px;background:#565656;"></div>
<div class="a" style="left:23px;top:341px;width:3px;height:1px;background:#565656;"></div>
<div class="a" style="left:24px;top:347px;width:2px;height:1px;background:#565656;"></div>
<div class="a" style="left:24px;top:353px;width:2px;height:1px;background:#565656;"></div>
<div class="a" style="left:24px;top:359px;width:2px;height:1px;background:#565656;"></div>
<div class="a" style="left:24px;top:366px;width:2px;height:1px;background:#565656;"></div>
<div class="a" style="left:18px;top:372px;width:8px;height:1px;background:#5c5c5c;"></div>
<div class="t" style="left:19px;top:374px;font-size:5.5px;color:#bbb;">3</div>
<div class="a" style="left:24px;top:378px;width:2px;height:1px;background:#565656;"></div>
<div class="a" style="left:24px;top:384px;width:2px;height:1px;background:#565656;"></div>
<div class="a" style="left:24px;top:390px;width:2px;height:1px;background:#565656;"></div>
<div class="a" style="left:24px;top:397px;width:2px;height:1px;background:#565656;"></div>
<div class="a" style="left:23px;top:403px;width:3px;height:1px;background:#565656;"></div>
<div class="a" style="left:24px;top:409px;width:2px;height:1px;background:#565656;"></div>
<div class="a" style="left:24px;top:415px;width:2px;height:1px;background:#565656;"></div>
<div class="a" style="left:24px;top:421px;width:2px;height:1px;background:#565656;"></div>
<div class="a" style="left:24px;top:428px;width:2px;height:1px;background:#565656;"></div>
<div class="a" style="left:18px;top:434px;width:8px;height:1px;background:#5c5c5c;"></div>
<div class="t" style="left:19px;top:436px;font-size:5.5px;color:#bbb;">4</div>
<div class="a" style="left:24px;top:440px;width:2px;height:1px;background:#565656;"></div>
<div class="a" style="left:24px;top:446px;width:2px;height:1px;background:#565656;"></div>
<div class="a" style="left:24px;top:453px;width:2px;height:1px;background:#565656;"></div>
<div class="a" style="left:24px;top:459px;width:2px;height:1px;background:#565656;"></div>
<div class="a" style="left:23px;top:465px;width:3px;height:1px;background:#565656;"></div>
<div class="a" style="left:24px;top:471px;width:2px;height:1px;background:#565656;"></div>
<div class="a" style="left:24px;top:477px;width:2px;height:1px;background:#565656;"></div>
<div class="a" style="left:24px;top:484px;width:2px;height:1px;background:#565656;"></div>
<div class="a" style="left:24px;top:490px;width:2px;height:1px;background:#565656;"></div>
<div class="a" style="left:18px;top:496px;width:8px;height:1px;background:#5c5c5c;"></div>
<div class="t" style="left:19px;top:498px;font-size:5.5px;color:#bbb;">5</div>
<div class="a" style="left:24px;top:502px;width:2px;height:1px;background:#565656;"></div>
<div class="a" style="left:24px;top:508px;width:2px;height:1px;background:#565656;"></div>
<div class="a" style="left:849px;top:42px;width:8px;height:472px;background:linear-gradient(90deg,#2e2e2e,#3e3e3e);"></div>
<div class="a" style="left:857px;top:31px;width:1px;height:483px;background:#262626;"></div>
<div class="a" style="left:858px;top:31px;width:149px;height:6px;background:#383838;"></div>
<div class="a" style="left:873px;top:33px;width:1px;height:2px;background:#d0d0d0;"></div>
<div class="a" style="left:875px;top:33px;width:1px;height:2px;background:#d0d0d0;"></div>
<div class="a" style="left:1001px;top:33px;width:1px;height:2px;background:#d0d0d0;"></div>
<div class="a" style="left:1003px;top:33px;width:1px;height:2px;background:#d0d0d0;"></div>
<div class="a" style="left:858px;top:37px;width:21px;height:477px;background:#535353;"></div>
<div class="a" style="left:858px;top:37px;width:1px;height:477px;background:#3e3e3e;"></div>
<div class="a" style="left:858px;top:72px;width:21px;height:2px;background:#404040;"></div>
<div class="a" style="left:858px;top:108px;width:21px;height:1px;background:#434343;"></div>
<div class="a" style="left:864px;top:39px;width:10px;height:2px;background:linear-gradient(90deg,#262626,#3a3a3a 70%,#555);"></div>
<div class="a" style="left:864px;top:75px;width:10px;height:2px;background:linear-gradient(90deg,#262626,#3a3a3a 70%,#555);"></div>
<svg class="a" style="left:865px;top:44px" width="10" height="11" viewBox="0 0 10 11"><rect x="0.5" y="0.5" width="3" height="2.5" fill="none" stroke="#cfcfcf" stroke-width="0.8"/><rect x="0.5" y="4.3" width="3" height="2.2" fill="#cfcfcf"/><rect x="0.5" y="8" width="3" height="2.5" fill="#cfcfcf"/><path d="M5.5 0.5 H8.5 V10 L7 8.5" fill="none" stroke="#cfcfcf" stroke-width="1.3"/></svg>
<svg class="a" style="left:865px;top:59px" width="10" height="10" viewBox="0 0 10 10"><circle cx="2" cy="2.5" r="1.8" fill="#cfcfcf"/><rect x="0.5" y="4.5" width="3.5" height="3" fill="#cfcfcf"/><rect x="5.5" y="0.5" width="3" height="2.5" fill="#cfcfcf"/><rect x="5.5" y="4" width="3" height="2.5" fill="#cfcfcf"/><rect x="0.5" y="8.3" width="8" height="1.7" fill="#cfcfcf"/></svg>
<svg class="a" style="left:865px;top:81px" width="10" height="10" viewBox="0 0 10 10"><path d="M0.5 9 L3.5 0.8 L6.5 9 M1.7 6 H5.3" fill="none" stroke="#cfcfcf" stroke-width="1"/><path d="M8.5 0.5 V9.5" stroke="#cfcfcf" stroke-width="1"/></svg>
<svg class="a" style="left:866px;top:96px" width="7" height="10" viewBox="0 0 7 10"><path d="M3 0.5 H6.5 M4.2 0.5 V9.5 M6 0.5 V9.5" stroke="#cfcfcf" stroke-width="0.8"/><path d="M3.8 0.5 A2 2 0 0 0 3.8 4.8 Z" fill="#cfcfcf"/></svg>
<div class="a" style="left:879px;top:37px;width:1px;height:477px;background:#2a2a2a;"></div>
<div class="a" style="left:880px;top:37px;width:127px;height:477px;background:#474747;"></div>
<div class="a" style="left:880px;top:37px;width:127px;height:9px;background:#3c3c3c;"></div>
<div class="a" style="left:880px;top:37px;width:21px;height:9px;background:#535353;"></div>
<div class="a" style="left:901px;top:37px;width:20px;height:9px;background:#474747;"></div>
<div class="t" style="left:884px;top:38.5px;font-size:6.5px;color:#f0f0f0;">调整</div>
<div class="t" style="left:904.5px;top:38.5px;font-size:6.5px;color:#b0b0b0;">样式</div>
<svg class="a" style="left:996.5px;top:40.5px" width="4" height="3" viewBox="0 0 4 3"><path d="M0 0.3 H3.5 L1.75 2.5 Z" fill="#c8c8c8"/></svg>
<div class="a" style="left:1000px;top:40px;width:4px;height:4px;background:#b5b5b5;"></div>
<div class="a" style="left:880px;top:46px;width:127px;height:59px;background:#535353;"></div>
<div class="t" style="left:885px;top:50px;font-size:6.3px;color:#b8b8b8;">添加调整</div>
<svg class="a" style="left:904px;top:62px" width="10" height="9" viewBox="0 0 10 9"><g transform="translate(5 4.5) scale(0.9) translate(-5 -4.5)"><circle cx="5" cy="4.5" r="2.2" fill="#c2c2c2"/><path d="M5 0 V9 M0.5 4.5 H9.5 M1.8 1.3 L8.2 7.7 M8.2 1.3 L1.8 7.7" stroke="#c2c2c2" stroke-width="0.8"/></g></svg>
<svg class="a" style="left:917px;top:62px" width="10" height="9" viewBox="0 0 10 9"><g transform="translate(5 4.5) scale(0.9) translate(-5 -4.5)"><path d="M0.5 8 V4 L2.5 2.5 L4 4 L5.5 2 L7 3.5 L9.5 3 V8 Z" fill="#c2c2c2"/></g></svg>
<svg class="a" style="left:930.5px;top:62px" width="10" height="9" viewBox="0 0 10 9"><g transform="translate(5 4.5) scale(0.9) translate(-5 -4.5)"><rect x="0.5" y="0.5" width="9" height="8" fill="none" stroke="#c2c2c2" stroke-width="0.9"/><path d="M0.5 8.5 L9.5 0.5 M0.5 4.5 H9.5 M5 0.5 V8.5" stroke="#c2c2c2" stroke-width="0.6"/></g></svg>
<svg class="a" style="left:942.5px;top:62px" width="10" height="9" viewBox="0 0 10 9"><g transform="translate(5 4.5) scale(0.9) translate(-5 -4.5)"><rect x="0.5" y="0.5" width="9" height="8" fill="#8a8a8a" stroke="#a5a5a5" stroke-width="0.8"/><path d="M0.5 8.5 L9.5 0.5" stroke="#ccc" stroke-width="0.9"/></g></svg>
<svg class="a" style="left:955.5px;top:62px" width="10" height="9" viewBox="0 0 10 9"><g transform="translate(5 4.5) scale(0.9) translate(-5 -4.5)"><path d="M0.5 0.5 H9.5 L5 8.5 Z" fill="#8a8a8a" stroke="#b8b8b8" stroke-width="0.8"/></g></svg>
<svg class="a" style="left:898.5px;top:76.5px" width="10" height="9" viewBox="0 0 10 9"><g transform="translate(5 4.5) scale(0.9) translate(-5 -4.5)"><defs><linearGradient id="gg" x1="0" x2="1"><stop offset="0" stop-color="#333"/><stop offset="1" stop-color="#c8c8c8"/></linearGradient></defs><rect x="0.5" y="0.5" width="9" height="8" fill="url(#gg)" stroke="#c2c2c2" stroke-width="0.8"/><rect x="0.5" y="0.5" width="9" height="2.5" fill="#c2c2c2"/></g></svg>
<svg class="a" style="left:911px;top:76.5px" width="10" height="9" viewBox="0 0 10 9"><g transform="translate(5 4.5) scale(0.9) translate(-5 -4.5)"><path d="M5 0.5 V8.5 M3 8.5 H7 M1 2 H9" stroke="#c2c2c2" stroke-width="0.9"/><path d="M1 2 L0 6 H2 Z M9 2 L8 6 H10 Z" fill="#c2c2c2"/></g></svg>
<svg class="a" style="left:924.5px;top:76.5px" width="10" height="9" viewBox="0 0 10 9"><g transform="translate(5 4.5) scale(0.9) translate(-5 -4.5)"><rect x="0.5" y="0.5" width="9" height="8" fill="#666" stroke="#c2c2c2" stroke-width="0.8"/><rect x="5" y="0.5" width="4.5" height="8" fill="#c2c2c2"/></g></svg>
<svg class="a" style="left:936.5px;top:76.5px" width="10" height="9" viewBox="0 0 10 9"><g transform="translate(5 4.5) scale(0.9) translate(-5 -4.5)"><circle cx="4" cy="3.5" r="3" fill="#c2c2c2"/><circle cx="6" cy="6" r="3" fill="none" stroke="#c2c2c2" stroke-width="1"/></g></svg>
<svg class="a" style="left:949px;top:76.5px" width="10" height="9" viewBox="0 0 10 9"><g transform="translate(5 4.5) scale(0.9) translate(-5 -4.5)"><circle cx="5" cy="2.8" r="2.6" fill="#c2c2c2"/><circle cx="3" cy="6" r="2.6" fill="#c2c2c2"/><circle cx="7" cy="6" r="2.6" fill="#c2c2c2"/></g></svg>
<svg class="a" style="left:962px;top:76.5px" width="10" height="9" viewBox="0 0 10 9"><g transform="translate(5 4.5) scale(0.9) translate(-5 -4.5)"><rect x="0.5" y="0.5" width="9" height="8" fill="#777" stroke="#c2c2c2" stroke-width="0.8"/><path d="M3.5 0.5 V8.5 M6.5 0.5 V8.5 M0.5 3 H9.5" stroke="#c2c2c2" stroke-width="0.8"/></g></svg>
<svg class="a" style="left:904.5px;top:91px" width="10" height="9" viewBox="0 0 10 9"><g transform="translate(5 4.5) scale(0.9) translate(-5 -4.5)"><rect x="0.5" y="0.5" width="9" height="8" fill="#777" stroke="#c2c2c2" stroke-width="0.8"/><path d="M1.5 7.5 L8.5 1.5" stroke="#c8c8c8" stroke-width="1.2"/></g></svg>
<svg class="a" style="left:917px;top:91px" width="10" height="9" viewBox="0 0 10 9"><g transform="translate(5 4.5) scale(0.9) translate(-5 -4.5)"><rect x="0.5" y="0.5" width="9" height="8" fill="#777" stroke="#c2c2c2" stroke-width="0.8"/><path d="M0.5 8.5 L9.5 0.5 M2.5 8.5 L9.5 2.5" stroke="#c0c0c0" stroke-width="1.2"/></g></svg>
<svg class="a" style="left:930.5px;top:91px" width="10" height="9" viewBox="0 0 10 9"><g transform="translate(5 4.5) scale(0.9) translate(-5 -4.5)"><rect x="0.5" y="0.5" width="9" height="8" fill="#555" stroke="#c2c2c2" stroke-width="0.8"/><path d="M0.5 7.5 L9.5 1.5" stroke="#c8c8c8" stroke-width="1.6"/></g></svg>
<svg class="a" style="left:942.5px;top:91px" width="10" height="9" viewBox="0 0 10 9"><g transform="translate(5 4.5) scale(0.9) translate(-5 -4.5)"><rect x="0.5" y="0.5" width="9" height="8" fill="#888" stroke="#c2c2c2" stroke-width="0.8"/><path d="M0.5 0.5 L5 4.5 L9.5 0.5 M0.5 8.5 L5 4.5 L9.5 8.5" fill="none" stroke="#c0c0c0" stroke-width="0.9"/></g></svg>
<svg class="a" style="left:955.5px;top:91px" width="10" height="9" viewBox="0 0 10 9"><g transform="translate(5 4.5) scale(0.9) translate(-5 -4.5)"><defs><linearGradient id="gg" x1="0" x2="1"><stop offset="0" stop-color="#333"/><stop offset="1" stop-color="#c8c8c8"/></linearGradient></defs><rect x="0.5" y="0.5" width="9" height="8" fill="url(#gg)" stroke="#c2c2c2" stroke-width="0.8"/></g></svg>
<div class="a" style="left:880px;top:105px;width:127px;height:2px;background:#333333;"></div>
<div class="a" style="left:880px;top:107px;width:127px;height:9px;background:#3c3c3c;"></div>
<div class="a" style="left:880px;top:107px;width:21px;height:9px;background:#535353;"></div>
<div class="a" style="left:901px;top:107px;width:20px;height:9px;background:#474747;"></div>
<div class="a" style="left:922px;top:107px;width:20px;height:9px;background:#474747;"></div>
<div class="t" style="left:884px;top:108.5px;font-size:6.5px;color:#f0f0f0;">图层</div>
<div class="t" style="left:904px;top:108.5px;font-size:6.5px;color:#b8b8b8;">通道</div>
<div class="t" style="left:925px;top:108.5px;font-size:6.5px;color:#b8b8b8;">路径</div>
<svg class="a" style="left:996.5px;top:110.5px" width="4" height="3" viewBox="0 0 4 3"><path d="M0 0.3 H3.5 L1.75 2.5 Z" fill="#c8c8c8"/></svg>
<div class="a" style="left:1000px;top:110px;width:4px;height:4px;background:#1e1e1e;"></div>
<div class="a" style="left:880px;top:116px;width:127px;height:45px;background:#535353;"></div>
<div class="a" style="left:883px;top:118px;width:37px;height:10px;background:#5a5a5a;border:1px solid #454545;border-radius:1px"></div>
<div class="t" style="left:886px;top:119.5px;font-size:6.5px;color:#d6d6d6;">ρ 类型</div>
<svg class="a" style="left:914px;top:119.5px" width="5" height="7"><path d="M0.7 2.8 L2.5 0.8 L4.3 2.8 Z M0.7 4.2 L2.5 6.2 L4.3 4.2 Z" fill="#bbb"/></svg>
<svg class="a" style="left:930.5px;top:119.5px" width="8" height="7" viewBox="0 0 8 7"><rect x="0.5" y="0.5" width="7" height="6" fill="none" stroke="#a8a8a8" stroke-width="0.9"/><path d="M2 6 L4 4 L5.5 5 L7 3 V6.5 H2 Z" fill="#a8a8a8"/></svg>
<svg class="a" style="left:942px;top:119px" width="9" height="9" viewBox="0 0 9 9"><circle cx="4.5" cy="4.5" r="3.8" fill="#a8a8a8"/><path d="M2.5 6.5 L6.5 2.5" stroke="#535353" stroke-width="1"/></svg>
<div class="t" style="left:956px;top:118.8px;font-size:8.5px;color:#a8a8a8;font-family:'Liberation Serif',serif">T</div>
<svg class="a" style="left:968px;top:119px" width="9" height="9" viewBox="0 0 9 9"><path d="M0.5 3 V0.5 H3 M6 0.5 H8.5 V3 M8.5 6 V8.5 H6 M3 8.5 H0.5 V6" fill="none" stroke="#a8a8a8" stroke-width="1.1"/></svg>
<svg class="a" style="left:981px;top:118px" width="8" height="10" viewBox="0 0 8 10"><rect x="0.5" y="4" width="6.5" height="5.5" fill="#a8a8a8"/><path d="M2 4 V2.5 A1.8 1.8 0 0 1 5.5 2.5 V4" fill="none" stroke="#a8a8a8" stroke-width="1"/></svg>
<div class="a" style="left:1000px;top:118px;width:5px;height:10px;background:#444;border:1px solid #3a3a3a"></div>
<div class="a" style="left:1001px;top:119px;width:3px;height:4px;background:#7a7a7a;"></div>
<div class="a" style="left:880px;top:130px;width:127px;height:1px;background:#474747;"></div>
<div class="a" style="left:883px;top:133px;width:58px;height:10px;background:#5a5a5a;border:1px solid #454545;border-radius:1px"></div>
<div class="t" style="left:887px;top:134.5px;font-size:6.5px;color:#d6d6d6;">正常</div>
<svg class="a" style="left:935px;top:134.5px" width="5" height="7"><path d="M0.7 2.8 L2.5 0.8 L4.3 2.8 Z M0.7 4.2 L2.5 6.2 L4.3 4.2 Z" fill="#bbb"/></svg>
<div class="t" style="left:945px;top:134.5px;font-size:6.5px;color:#cfcfcf;">不透明度:</div>
<div class="a" style="left:975px;top:132px;width:20px;height:12px;background:#474747;border:1px solid #444"></div>
<div class="t" style="left:977px;top:135px;font-size:5.5px;color:#777;">100%</div>
<div class="a" style="left:994px;top:132px;width:10px;height:12px;background:#5c5c5c;border:1px solid #444"></div>
<svg class="a" style="left:997.5px;top:137px" width="4" height="3" viewBox="0 0 4 3"><path d="M0 0.3 H3.5 L1.75 2.5 Z" fill="#9a9a9a"/></svg>
<div class="a" style="left:880px;top:145px;width:127px;height:1px;background:#474747;"></div>
<div class="t" style="left:883px;top:149.5px;font-size:6.5px;color:#cfcfcf;">锁定:</div>
<svg class="a" style="left:902px;top:150px" width="6" height="6" viewBox="0 0 6 6"><rect x="0.5" y="0.5" width="5" height="5" fill="#888" stroke="#a8a8a8" stroke-width="0.7"/><rect x="0.5" y="0.5" width="2.5" height="2.5" fill="#a8a8a8"/><rect x="3" y="3" width="2.5" height="2.5" fill="#a8a8a8"/></svg>
<svg class="a" style="left:913px;top:149px" width="9" height="9" viewBox="0 0 9 9"><path d="M1 8 L8 1" stroke="#a8a8a8" stroke-width="1"/><path d="M0.5 8.5 Q0.5 6 2.5 6.5 Q3 8.5 0.5 8.5 Z" fill="#a8a8a8"/></svg>
<svg class="a" style="left:925px;top:149px" width="9" height="9" viewBox="0 0 9 9"><path d="M4.5 0.5 V8.5 M0.5 4.5 H8.5" stroke="#a8a8a8" stroke-width="0.9"/><path d="M4.5 0 L3 1.5 H6 Z M4.5 9 L3 7.5 H6 Z M0 4.5 L1.5 3 V6 Z M9 4.5 L7.5 3 V6 Z" fill="#a8a8a8"/></svg>
<svg class="a" style="left:938px;top:149px" width="7" height="8" viewBox="0 0 7 8"><rect x="0.5" y="3.5" width="6" height="4.5" fill="#a8a8a8"/><path d="M1.8 3.5 V2 A1.7 1.7 0 0 1 5.2 2 V3.5" fill="none" stroke="#a8a8a8" stroke-width="0.9"/><rect x="3" y="5" width="1" height="1.5" fill="#535353"/></svg>
<div class="t" style="left:957px;top:149.5px;font-size:6.5px;color:#cfcfcf;">填充:</div>
<div class="a" style="left:975px;top:147px;width:20px;height:12px;background:#474747;border:1px solid #444"></div>
<div class="t" style="left:977px;top:150px;font-size:5.5px;color:#777;">100%</div>
<div class="a" style="left:994px;top:147px;width:10px;height:12px;background:#5c5c5c;border:1px solid #444"></div>
<svg class="a" style="left:997.5px;top:152px" width="4" height="3" viewBox="0 0 4 3"><path d="M0 0.3 H3.5 L1.75 2.5 Z" fill="#9a9a9a"/></svg>
<div class="a" style="left:880px;top:160px;width:127px;height:1px;background:#474747;"></div>
<div class="a" style="left:880px;top:161px;width:119px;height:21px;background:#535353;"></div>
<div class="a" style="left:896px;top:161px;width:103px;height:21px;background:#687c95;"></div>
<svg class="a" style="left:884.5px;top:168.5px" width="8" height="5" viewBox="0 0 8 5"><path d="M0.5 2.5 Q4 -0.8 7.5 2.5 Q4 5.8 0.5 2.5 Z" fill="none" stroke="#d8d8d8" stroke-width="0.9"/><circle cx="4" cy="2.5" r="1.3" fill="#d8d8d8"/></svg>
<div class="a" style="left:898px;top:163px;width:13px;height:17px;background:#ffffff;border-right:1px solid #222;border-bottom:1px solid #222"></div>
<div class="t" style="left:917px;top:168px;font-size:6.5px;color:#ffffff;font-style:italic">背景</div>
<svg class="a" style="left:983.5px;top:167px" width="7" height="9" viewBox="0 0 7 9"><rect x="0.5" y="3.5" width="6" height="5" fill="#a9b3c0" stroke="#e6e6e6" stroke-width="0.9"/><path d="M1.8 3.5 V2.3 A1.7 1.7 0 0 1 5.2 2.3 V3.5" fill="none" stroke="#e6e6e6" stroke-width="0.9"/></svg>
<div class="a" style="left:999px;top:161px;width:8px;height:353px;background:#3f3f3f;border-left:1px solid #383838"></div>
<div class="a" style="left:1007px;top:13px;width:1px;height:501px;background:#f4f4f4;"></div>
<div class="a" style="left:359px;top:184px;width:157px;height:219px;background:#1e1e1e;"></div>
<div class="a" style="left:360px;top:185px;width:155px;height:217px;background:#ffffff;"></div>
<div class="a" style="left:540px;top:125px;width:263px;height:206px;background:#ececec;border:1px solid #f8f8f8;border-top-color:#a8a8a8;box-shadow:0 0 0 1px #1c1c1c,0 0 4px 1px rgba(0,0,0,0.25)"></div>
<div class="a" style="left:541px;top:126px;width:261px;height:12.5px;background:#ffffff;"></div>
<div class="t" style="left:542px;top:129px;font-size:6.5px;color:#111;-webkit-text-stroke:0.15px #111">新建</div>
<svg class="a" style="left:790px;top:128px" width="9" height="8"><path d="M1 1 L8 7 M8 1 L1 7" stroke="#222" stroke-width="0.9"/></svg>
<svg class="a" style="left:703px;top:132px" width="9" height="12"><path d="M1 1 L1 9.5 L3 7.5 L4.6 10.8 L6 10.2 L4.5 7 L7.3 7 Z" fill="#fff" stroke="#111" stroke-width="0.8"/></svg>
<div class="a" style="left:546px;top:161px;width:185px;height:164px;background:transparent;border:1px solid #d5d5d5;box-shadow:1px 1px 0 #fff inset"></div>
<div class="a" style="left:554px;top:157px;width:170px;height:9px;background:#ececec;"></div>
<div class="t" style="right:395.5px;top:146.2px;font-size:6.5px;color:#101010;-webkit-text-stroke:0.15px #101010;letter-spacing:0px">名称(N):</div>
<div class="a" style="left:614px;top:144px;width:118px;height:11px;background:#fff;border:1px solid #a0a0a0;border-color:#b4b4b4;border-left-color:#7f7f7f;border-top-color:#a0a0a0;"></div>
<div class="t" style="left:616.5px;top:146.8px;font-size:6.5px;color:#101010;-webkit-text-stroke:0.12px #111">未标题-2</div>
<div class="t" style="right:419.5px;top:160.5px;font-size:6.5px;color:#101010;-webkit-text-stroke:0.15px #101010;letter-spacing:0px">预设(P):</div>
<div class="a" style="left:590px;top:156px;width:132px;height:13px;background:#fff;border:1px solid #a5a5a5"></div>
<div class="t" style="left:593px;top:160.95000000000002px;font-size:6.5px;color:#101010;-webkit-text-stroke:0.12px #111">自定</div>
<svg class="a" style="left:713px;top:161.0px" width="6" height="4"><path d="M0.5 0.5 L3 3 L5.5 0.5" fill="none" stroke="#555" stroke-width="0.8"/></svg>
<div class="t" style="right:395.5px;top:176.5px;font-size:6.5px;color:#a8a8a8;-webkit-text-stroke:0.15px #a8a8a8;letter-spacing:0px">大小(I):</div>
<div class="a" style="left:614px;top:173px;width:105px;height:12px;background:#eaeaea;border:1px solid #cccccc"></div>
<svg class="a" style="left:710px;top:177.5px" width="6" height="4"><path d="M0.5 0.5 L3 3 L5.5 0.5" fill="none" stroke="#b8b8b8" stroke-width="0.8"/></svg>
<div class="t" style="right:395.5px;top:192.5px;font-size:6.5px;color:#101010;-webkit-text-stroke:0.15px #101010;letter-spacing:0px">宽度(W):</div>
<div class="a" style="left:614px;top:189px;width:52px;height:11px;background:#fff;border:1px solid #a0a0a0;border-color:#b4b4b4;border-left-color:#7f7f7f;border-top-color:#a0a0a0;"></div>
<div class="t" style="left:616.5px;top:191.8px;font-size:6.5px;color:#101010;-webkit-text-stroke:0.12px #111">2.5</div>
<div class="a" style="left:668px;top:189px;width:51px;height:11px;background:#fff;border:1px solid #a5a5a5"></div>
<div class="t" style="left:671px;top:192.05px;font-size:6.5px;color:#101010;-webkit-text-stroke:0.12px #111">厘米</div>
<svg class="a" style="left:710px;top:193.0px" width="6" height="4"><path d="M0.5 0.5 L3 3 L5.5 0.5" fill="none" stroke="#555" stroke-width="0.8"/></svg>
<div class="t" style="right:395.5px;top:208.5px;font-size:6.5px;color:#101010;-webkit-text-stroke:0.15px #101010;letter-spacing:0px">高度(H):</div>
<div class="a" style="left:614px;top:205px;width:52px;height:11px;background:#fff;border:1px solid #a0a0a0;border-color:#b4b4b4;border-left-color:#7f7f7f;border-top-color:#a0a0a0;"></div>
<div class="t" style="left:616.5px;top:207.8px;font-size:6.5px;color:#101010;-webkit-text-stroke:0.12px #111">3.5</div>
<div class="a" style="left:668px;top:205px;width:51px;height:11px;background:#fff;border:1px solid #a5a5a5"></div>
<div class="t" style="left:671px;top:208.05px;font-size:6.5px;color:#101010;-webkit-text-stroke:0.12px #111">厘米</div>
<svg class="a" style="left:710px;top:209.0px" width="6" height="4"><path d="M0.5 0.5 L3 3 L5.5 0.5" fill="none" stroke="#555" stroke-width="0.8"/></svg>
<div class="t" style="right:395.5px;top:224px;font-size:6.5px;color:#101010;-webkit-text-stroke:0.15px #101010;letter-spacing:0px">分辨率(R):</div>
<div class="a" style="left:614px;top:221px;width:52px;height:11px;background:#fff;border:1px solid #0078d7;"></div>
<div class="t" style="left:616.5px;top:223.8px;font-size:6.5px;color:#101010;-webkit-text-stroke:0.12px #111">300</div>
<div class="a" style="left:628px;top:223px;width:0.7px;height:7px;background:#111;"></div>
<div class="a" style="left:668px;top:221px;width:51px;height:11px;background:#fff;border:1px solid #a5a5a5"></div>
<div class="t" style="left:671px;top:224.05px;font-size:6.5px;color:#101010;-webkit-text-stroke:0.12px #111">像素/英寸</div>
<svg class="a" style="left:710px;top:225.0px" width="6" height="4"><path d="M0.5 0.5 L3 3 L5.5 0.5" fill="none" stroke="#555" stroke-width="0.8"/></svg>
<div class="t" style="right:395.5px;top:240px;font-size:6.5px;color:#101010;-webkit-text-stroke:0.15px #101010;letter-spacing:-0.18px">颜色模式(M):</div>
<div class="a" style="left:614px;top:237px;width:50px;height:11px;background:#fff;border:1px solid #a5a5a5"></div>
<div class="t" style="left:617px;top:240.05px;font-size:6.5px;color:#101010;-webkit-text-stroke:0.12px #111">CMYK 颜色</div>
<svg class="a" style="left:655px;top:241.0px" width="6" height="4"><path d="M0.5 0.5 L3 3 L5.5 0.5" fill="none" stroke="#555" stroke-width="0.8"/></svg>
<div class="a" style="left:668px;top:237px;width:51px;height:11px;background:#fff;border:1px solid #a5a5a5"></div>
<div class="t" style="left:671px;top:240.05px;font-size:6.5px;color:#101010;-webkit-text-stroke:0.12px #111">8 位</div>
<svg class="a" style="left:710px;top:241.0px" width="6" height="4"><path d="M0.5 0.5 L3 3 L5.5 0.5" fill="none" stroke="#555" stroke-width="0.8"/></svg>
<div class="t" style="right:395.5px;top:255.5px;font-size:6.5px;color:#101010;-webkit-text-stroke:0.15px #101010;letter-spacing:0px">背景内容(C):</div>
<div class="a" style="left:614px;top:252px;width:105px;height:12px;background:#fff;border:1px solid #a5a5a5"></div>
<div class="t" style="left:617px;top:255.55px;font-size:6.5px;color:#101010;-webkit-text-stroke:0.12px #111">白色</div>
<svg class="a" style="left:710px;top:256.5px" width="6" height="4"><path d="M0.5 0.5 L3 3 L5.5 0.5" fill="none" stroke="#555" stroke-width="0.8"/></svg>
<div class="a" style="left:557px;top:274.5px;width:9px;height:9px;background:#f6f6f6;border:1px solid #b0b0b0;border-radius:50%"></div>
<svg class="a" style="left:559px;top:276.5px" width="5" height="5"><path d="M0.7 2.2 L2.5 0.7 L4.3 2.2 M0.7 4.2 L2.5 2.7 L4.3 4.2" fill="none" stroke="#333" stroke-width="0.7"/></svg>
<div class="t" style="left:568px;top:276px;font-size:6.5px;color:#101010;-webkit-text-stroke:0.2px #111">高级</div>
<div class="a" style="left:585px;top:278px;width:128px;height:1px;background:#c8c8c8;"></div>
<div class="t" style="right:395.5px;top:296.5px;font-size:6.5px;color:#101010;-webkit-text-stroke:0.15px #101010;letter-spacing:-0.25px">颜色配置文件(O):</div>
<div class="a" style="left:614px;top:293px;width:105px;height:12px;background:#fff;border:1px solid #a5a5a5"></div>
<div class="t" style="left:617px;top:296.55px;font-size:6.5px;color:#101010;-webkit-text-stroke:0.12px #111"><span style="letter-spacing:-0.7px">不要对此文档进行色彩管理</span></div>
<svg class="a" style="left:710px;top:297.5px" width="6" height="4"><path d="M0.5 0.5 L3 3 L5.5 0.5" fill="none" stroke="#555" stroke-width="0.8"/></svg>
<div class="t" style="right:395.5px;top:312.5px;font-size:6.5px;color:#101010;-webkit-text-stroke:0.15px #101010;letter-spacing:-0.2px">像素长宽比(X):</div>
<div class="a" style="left:614px;top:309px;width:105px;height:12px;background:#fff;border:1px solid #a5a5a5"></div>
<div class="t" style="left:617px;top:312.55px;font-size:6.5px;color:#101010;-webkit-text-stroke:0.12px #111"><span style="letter-spacing:-0.7px">方形像素</span></div>
<svg class="a" style="left:710px;top:313.5px" width="6" height="4"><path d="M0.5 0.5 L3 3 L5.5 0.5" fill="none" stroke="#555" stroke-width="0.8"/></svg>
<div class="a" style="left:741px;top:144px;width:56px;height:11px;background:#e1e1e1;border:1px solid #0078d7;box-shadow:inset 0 0 0 0.5px #0078d7"></div>
<div class="t" style="left:741px;width:56px;text-align:center;top:146.3px;font-size:6.5px;color:#101010;-webkit-text-stroke:0.12px #101010">确定</div>
<div class="a" style="left:741px;top:159px;width:56px;height:11px;background:#e1e1e1;border:1px solid #adadad"></div>
<div class="t" style="left:741px;width:56px;text-align:center;top:161.3px;font-size:6.5px;color:#101010;-webkit-text-stroke:0.12px #101010">取消</div>
<div class="a" style="left:741px;top:174px;width:56px;height:11px;background:#e1e1e1;border:1px solid #adadad"></div>
<div class="t" style="left:741px;width:56px;text-align:center;top:176.3px;font-size:6.5px;color:#101010;-webkit-text-stroke:0.12px #101010">存储预设(S)...</div>
<div class="a" style="left:741px;top:189px;width:56px;height:11px;background:#cccccc;border:1px solid #c8c8c8"></div>
<div class="t" style="left:741px;width:56px;text-align:center;top:191.3px;font-size:6.5px;color:#9a9a9a;-webkit-text-stroke:0.12px #9a9a9a">删除预设(D)...</div>
<div class="t" style="left:755px;top:261.5px;font-size:6.2px;color:#101010;-webkit-text-stroke:0.12px #111">图像大小:</div>
<div class="t" style="left:758px;top:273.8px;font-size:6.5px;color:#101010;-webkit-text-stroke:0.12px #111">475.9K</div>
</body></html>
